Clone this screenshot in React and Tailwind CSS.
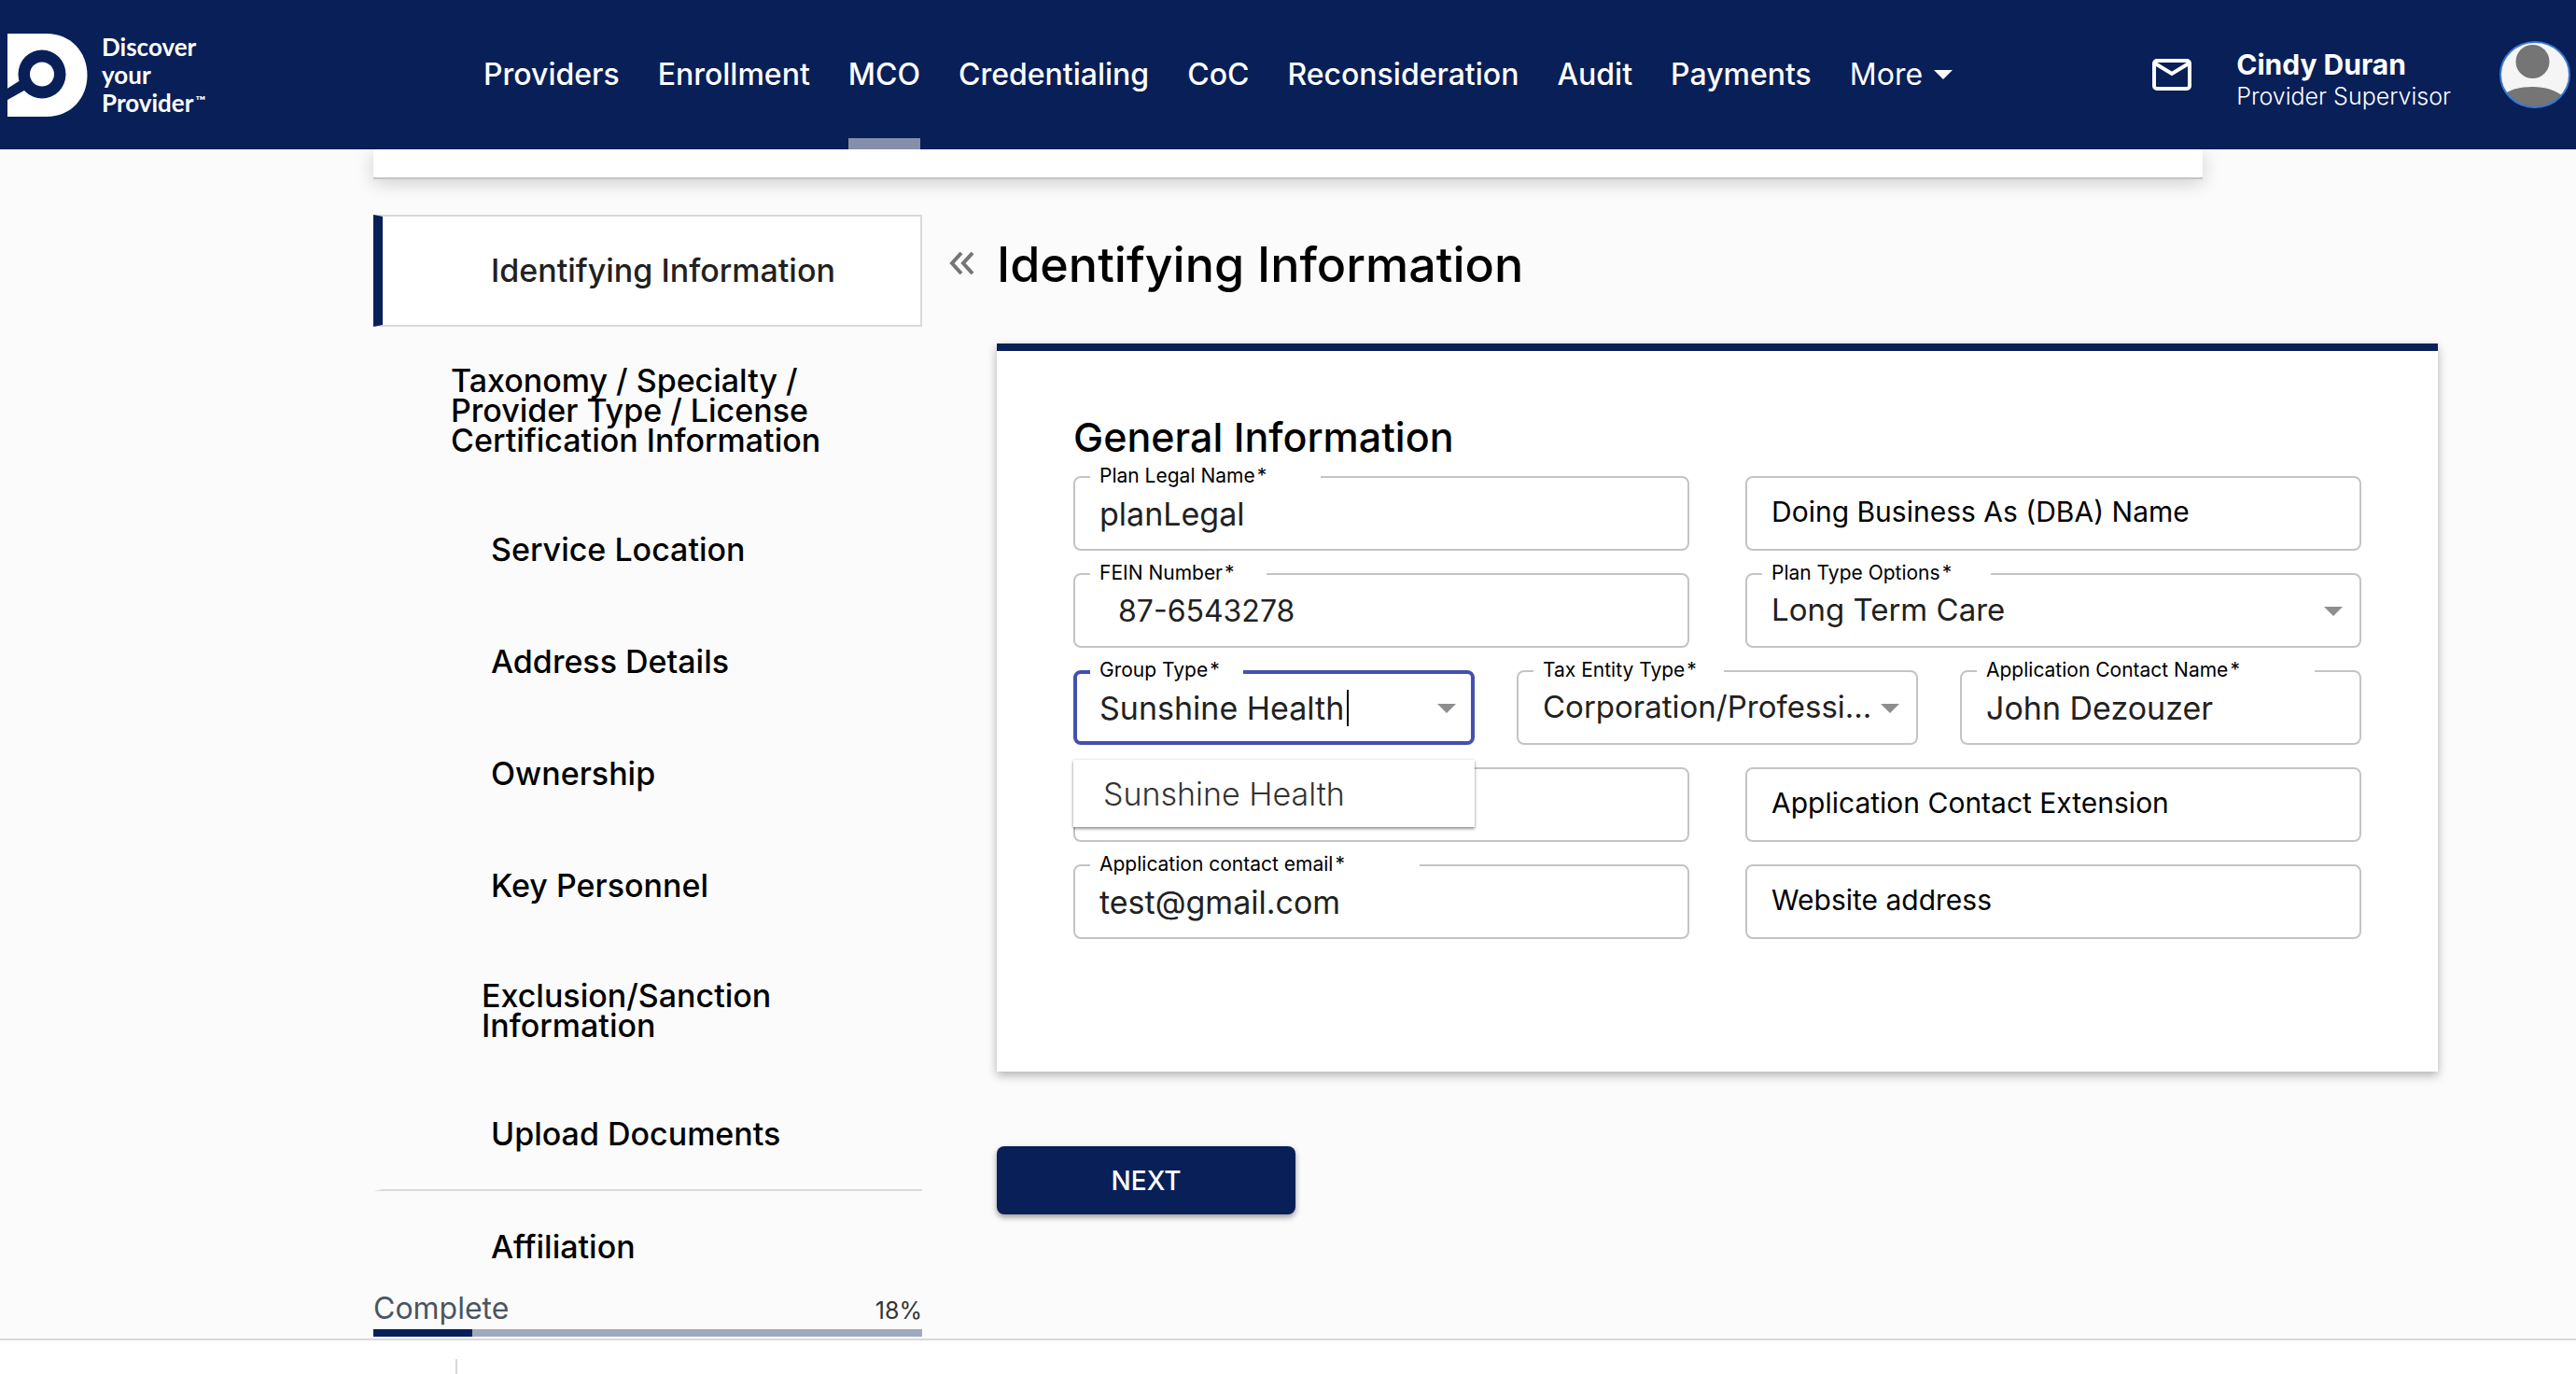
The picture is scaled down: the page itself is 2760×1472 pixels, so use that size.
import React from "react";

const navItems = [
  "Providers",
  "Enrollment",
  "MCO",
  "Credentialing",
  "CoC",
  "Reconsideration",
  "Audit",
  "Payments",
];

const steps = [
  { label: "Identifying Information", size: "h-[120px] pl-[116px]", active: true },
  {
    label: "Taxonomy / Specialty / Provider Type / License Certification Information",
    size: "h-[179px] pl-[73px] pr-20",
  },
  { label: "Service Location", size: "h-[120px] pl-[116px]" },
  { label: "Address Details", size: "h-[120px] pl-[116px]" },
  { label: "Ownership", size: "h-[120px] pl-[116px]" },
  { label: "Key Personnel", size: "h-[120px] pl-[116px]" },
  { label: "Exclusion/Sanction Information", size: "h-[147px] pl-[106px] pr-28" },
  { label: "Upload Documents", size: "h-[120px] pl-[116px]", divider: true },
  { label: "Affiliation", size: "h-[120px] pl-[116px]" },
];

function Logo() {
  return (
    <a href="#home" className="flex items-center gap-[15px] pl-2 text-white">
      <svg width="86" height="89" viewBox="0 0 86 89" aria-hidden="true">
        <path d="M0 0H42C68 0 85.500 20 85.500 44.500S68 89 42 89H0Z" fill="#fff" />
        <path d="M-2 60L17 48L25 57L-2 72Z" fill="#081f58" />
        <ellipse cx="37" cy="43.500" rx="25.500" ry="26" fill="#081f58" />
        <circle cx="37" cy="43.500" r="13" fill="#fff" />
      </svg>
      <span className="font-['Lato','Inter',sans-serif] text-[26px] leading-[30px] font-bold">
        Discover
        <br />
        your
        <br />
        Provider<sup className="pl-0.5 text-[14px]">™</sup>
      </span>
    </a>
  );
}

function Caret({ className }) {
  return (
    <svg width="20" height="10" viewBox="0 0 20 10" className={className} aria-hidden="true">
      <path d="M0 0H20L10 10Z" fill="currentColor" />
    </svg>
  );
}

function Avatar() {
  return (
    <svg width="76" height="72" viewBox="0 0 76 72" aria-hidden="true">
      <defs>
        <clipPath id="avatar-clip">
          <ellipse cx="38" cy="36" rx="37" ry="35" />
        </clipPath>
      </defs>
      <ellipse cx="38" cy="36" rx="37" ry="35" fill="#f5f5f5" />
      <g clipPath="url(#avatar-clip)" fill="#757575">
        <circle cx="35.500" cy="22" r="18" />
        <path d="M0 72V60C10 52 22 49 35.500 49S60 52 72 62V72Z" />
      </g>
      <ellipse cx="38" cy="36" rx="37" ry="35" fill="none" stroke="#3b77cf" strokeWidth="2" />
    </svg>
  );
}

function Outline({ notch, focused }) {
  return (
    <fieldset
      aria-hidden="true"
      className={
        focused
          ? "pointer-events-none absolute inset-x-0 -top-[3px] bottom-0 rounded-lg border-4 border-[#4350af] pl-[14px]"
          : notch
            ? "pointer-events-none absolute inset-x-0 -top-1 bottom-0 rounded-lg border-2 border-[#c4c4c4] pl-4"
            : "pointer-events-none absolute inset-0 rounded-lg border-2 border-[#c4c4c4]"
      }
    >
      {notch && <legend className={"h-[10px] " + notch} />}
    </fieldset>
  );
}

function Field({ id, label, notch, focused, children }) {
  return (
    <div className="relative h-20 min-w-0 flex-1">
      <Outline notch={notch} focused={focused} />
      <label
        htmlFor={id}
        className={
          notch
            ? "absolute -top-3 left-7 text-[21px] leading-6 whitespace-nowrap text-black"
            : "absolute -top-0.5 left-7 text-[30px] leading-[80px] whitespace-nowrap text-black"
        }
      >
        {label}
        {notch && <span className="pl-0.5">*</span>}
      </label>
      {children}
    </div>
  );
}

const control =
  "relative block h-full w-full appearance-none bg-transparent px-7 text-[#212121] outline-none";

function TextField({ id, label, value, notch, indent }) {
  return (
    <Field id={id} label={label} notch={notch}>
      <input
        id={id}
        type="text"
        defaultValue={value}
        className={control + (indent ? " pl-12 text-[32px]" : " text-[34px]")}
      />
    </Field>
  );
}

function SelectField({ id, label, value, notch }) {
  return (
    <Field id={id} label={label} notch={notch}>
      <select id={id} className={control + " truncate pr-11 text-[33px]"}>
        <option>{value}</option>
      </select>
      <Caret className="pointer-events-none absolute top-9 right-5 text-[#8e8e8e]" />
    </Field>
  );
}

function GroupTypeField() {
  return (
    <Field id="group-type" label="Group Type" notch="w-[164px]" focused>
      <input
        id="group-type"
        type="text"
        role="combobox"
        aria-expanded="true"
        aria-controls="group-type-list"
        defaultValue="Sunshine Health"
        className={control + " text-[34px] caret-transparent"}
      />
      <span className="absolute top-[21px] left-[293px] h-[39px] w-0.5 bg-black" />
      <Caret className="pointer-events-none absolute top-9 right-5 text-[#8e8e8e]" />
      <ul
        id="group-type-list"
        role="listbox"
        className="absolute inset-x-0 top-24 z-10 bg-white shadow-[0_2px_3px_rgba(0,0,0,0.4),0_0_3px_rgba(0,0,0,0.12)]"
      >
        <li
          role="option"
          aria-selected="true"
          className="flex h-[72px] items-center px-8 text-[34px] font-light text-[#333333]"
        >
          Sunshine Health
        </li>
      </ul>
    </Field>
  );
}

export default function App() {
  return (
    <div className="flex min-h-screen flex-col bg-[#fbfbfb] font-['Inter','Open_Sans',sans-serif] text-black">
      <header className="flex h-40 items-center bg-[#081f58] text-white">
        <div className="w-[518px] shrink-0">
          <Logo />
        </div>
        <nav className="flex h-full gap-[41px] text-[32px] font-medium">
          {navItems.map((item) => (
            <a key={item} href={"#" + item} className="relative flex items-center">
              {item}
              {item === "MCO" && (
                <span className="absolute inset-x-0 bottom-0 h-3 bg-[#858fab]" />
              )}
            </a>
          ))}
          <button type="button" className="flex items-center gap-3 font-normal">
            More
            <Caret />
          </button>
        </nav>
        <div className="ml-auto flex items-center">
          <button type="button" aria-label="Messages" className="mr-12">
            <svg width="42" height="34" viewBox="0 0 42 34" fill="none" aria-hidden="true">
              <rect x="2" y="2" width="38" height="30" rx="3" stroke="#fff" strokeWidth="4" />
              <path d="M3 5L21 16L39 5" stroke="#fff" strokeWidth="4" />
            </svg>
          </button>
          <div className="mr-[52px] pt-2.5">
            <div className="text-[30px] leading-9 font-bold">Cindy Duran</div>
            <div className="text-[25px] leading-8 font-light">Provider Supervisor</div>
          </div>
          <button type="button" aria-label="Account" className="mr-1.5">
            <Avatar />
          </button>
        </div>
      </header>

      <div className="mx-[400px] h-8 border-b-2 border-[#c4c4c4] bg-white shadow-[0_4px_20px_rgba(0,0,0,0.18)] [clip-path:inset(0_-40px_-40px_-40px)]" />

      <main className="flex items-start pt-[38px] pr-[148px] pl-[400px]">
        <aside className="w-[588px] shrink-0">
          <nav className="flex flex-col text-[34px] leading-8 font-medium">
            {steps.map((step) => (
              <a
                key={step.label}
                href={"#" + step.label.split(" ")[0]}
                className={
                  "flex items-center border-l-[10px] " +
                  step.size +
                  (step.active
                    ? " border-y-2 border-r-2 border-y-[#d9d9d9] border-r-[#d9d9d9] border-l-[#081f58] bg-white text-[#212121]"
                    : step.divider
                      ? " border-b-2 border-l-transparent border-b-[#d9d9d9]"
                      : " border-l-transparent")
                }
              >
                {step.label}
              </a>
            ))}
          </nav>
          <div className="-mt-[17px] flex h-[45px] items-baseline justify-between leading-[45px] text-[#4a5560]">
            <span id="progress-label" className="text-[32px]">Complete</span>
            <span className="text-[25px] text-[#333333]">18%</span>
          </div>
          <div
            role="progressbar"
            aria-labelledby="progress-label"
            aria-valuenow={18}
            className="mb-0.5 h-2 bg-[#a0aabe]"
          >
            <div className="h-2 w-[18%] bg-[#081f58]" />
          </div>
        </aside>

        <section className="flex min-w-0 flex-1 flex-col">
          <div className="flex h-[138px] items-start pt-6 pl-7">
            <button type="button" aria-label="Collapse menu" className="mt-4 w-[52px]">
              <svg width="28" height="24" viewBox="0 0 28 24" fill="none" aria-hidden="true">
                <path d="M14 1L4 12L14 23M26 1L16 12L26 23" stroke="#757575" strokeWidth="4" />
              </svg>
            </button>
            <h1 className="text-[52px] leading-[60px] font-medium">Identifying Information</h1>
          </div>
          <form className="ml-20 h-[780px] border-t-8 border-[#081f58] bg-white px-[82px] pt-16 shadow-[0_4px_10px_rgba(0,0,0,0.3)]">
            <h2 className="mb-3.5 text-[43px] leading-[56px] font-medium">General Information</h2>
            <div className="flex flex-col gap-6">
              <div className="flex gap-[60px]">
                <TextField id="plan-legal" label="Plan Legal Name" value="planLegal" notch="w-[247px]" />
                <TextField id="dba" label="Doing Business As (DBA) Name" />
              </div>
              <div className="flex gap-[60px]">
                <TextField id="fein" label="FEIN Number" value="87-6543278" notch="w-[189px]" indent />
                <SelectField id="plan-type" label="Plan Type Options" value="Long Term Care" notch="w-[245px]" />
              </div>
              <div className="flex gap-[45px]">
                <GroupTypeField />
                <SelectField
                  id="tax-entity"
                  label="Tax Entity Type"
                  value="Corporation/Professional Association"
                  notch="w-[204px]"
                />
                <TextField id="contact-name" label="Application Contact Name" value="John Dezouzer" notch="w-[362px]" />
              </div>
              <div className="flex gap-[60px]">
                <div className="relative h-20 flex-1">
                  <Outline />
                  <input type="tel" aria-label="Application Contact Phone" className={control} />
                </div>
                <TextField id="contact-ext" label="Application Contact Extension" />
              </div>
              <div className="flex gap-[60px]">
                <TextField
                  id="contact-email"
                  label="Application contact email"
                  value="test@gmail.com"
                  notch="w-[353px]"
                />
                <TextField id="website" label="Website address" />
              </div>
            </div>
          </form>
          <button
            type="button"
            className="mt-20 ml-20 h-[73px] w-80 rounded-lg bg-[#081f58] text-[28px] font-medium text-white shadow-[0_3px_6px_rgba(0,0,0,0.4)]"
          >
            NEXT
          </button>
        </section>
      </main>

      <footer className="flex-1 border-t-2 border-[#d9d9d9] bg-white pt-5 pl-[488px]">
        <div className="h-4 w-0.5 bg-[#d9d9d9]" />
      </footer>
    </div>
  );
}
